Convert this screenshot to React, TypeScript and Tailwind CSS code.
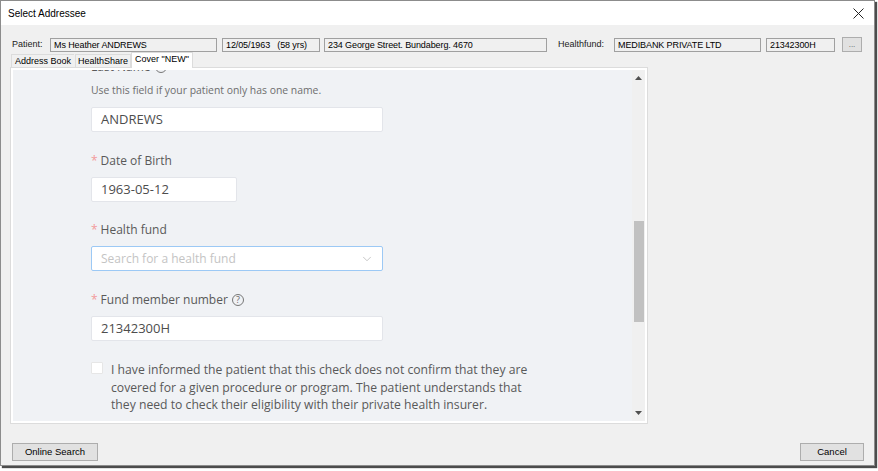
import { ChevronDown } from 'lucide-react';

const formFont = { fontFamily: '"Open Sans", "Noto Sans", sans-serif' };

function ReadBox({ width, children }: { width: string; children: React.ReactNode }) {
  return (
    <div className={`${width} h-[14px] border border-[#a0a0a0] bg-[#f0f0f0] px-[3px] text-[9px] leading-[12px] tracking-[-0.1px] text-black whitespace-nowrap overflow-hidden`}>
      {children}
    </div>
  );
}

function FieldLabel({ text, required, help }: { text: string; required?: boolean; help?: boolean }) {
  return (
    <div className="h-[18px] flex items-center text-[12px] text-[#595959]">
      {required && <span className="text-[#f39a9a] mr-[3px] text-[12px]">*</span>}
      <span>{text}</span>
      {help && (
        <span className="ml-[4px] w-[12px] h-[12px] rounded-full border border-[#777] text-[9px] leading-[10px] text-center text-[#666]">?</span>
      )}
    </div>
  );
}

function TextInput({ width, value }: { width: string; value: string }) {
  return (
    <div className={`${width} h-[25px] bg-white border border-[#e3e5ea] rounded-[2px] pl-[9px] flex items-center text-[13px] text-[#4d4d4d]`}>
      {value}
    </div>
  );
}

export default function App() {
  return (
    <div className="w-[878px] h-[471px] bg-white" style={{ fontFamily: '"Liberation Sans", Arial, sans-serif' }}>
      <div className="w-[875px] h-[466px] border border-[#8c8c8c] shadow-[2px_2px_1px_rgba(0,0,0,0.7)] flex flex-col bg-[#f0f0f0]">
        {/* title bar */}
        <div className="h-[24px] bg-white flex items-center justify-between pl-[7px] pr-[10px] shrink-0">
          <span className="text-[10px] text-black">Select Addressee</span>
          <svg width="11" height="11" viewBox="0 0 11 11" className="stroke-[#222]">
            <path d="M0.5 0.5 L10.5 10.5 M10.5 0.5 L0.5 10.5" strokeWidth="1" />
          </svg>
        </div>

        {/* patient summary row */}
        <div className="flex items-center mt-[12px] pl-[11px] text-[9px] text-black">
          <span className="w-[38px] text-[#222]">Patient:</span>
          <ReadBox width="w-[167px]">Ms Heather ANDREWS</ReadBox>
          <div className="w-[5px]" />
          <ReadBox width="w-[98px]">12/05/1963&nbsp;&nbsp;&nbsp;(58 yrs)</ReadBox>
          <div className="w-[4px]" />
          <ReadBox width="w-[223px]">234 George Street. Bundaberg. 4670</ReadBox>
          <span className="w-[56px] ml-[11px] text-[#222]">Healthfund:</span>
          <ReadBox width="w-[147px]">MEDIBANK PRIVATE LTD</ReadBox>
          <div className="w-[5px]" />
          <ReadBox width="w-[69px]">21342300H</ReadBox>
          <button className="ml-[7px] w-[20px] h-[15px] border border-[#adadad] bg-[#e1e1e1] text-[8px] leading-[10px] text-[#555]">...</button>
        </div>

        {/* tab strip */}
        <div className="relative z-10 -mb-[1px] flex items-end h-[16px] pl-[10px] text-[9px] text-black">
          <div className="h-[14px] w-[63px] border-t border-l border-[#dcdcdc] flex items-center justify-center">Address Book</div>
          <div className="h-[14px] w-[56px] ml-[1px] border-t border-l border-r border-[#dcdcdc] flex items-center justify-center">HealthShare</div>
          <div className="h-[16px] w-[62px] bg-white border-t border-l border-r border-[#dcdcdc] flex items-start justify-center pt-[1px] leading-[11px]">Cover "NEW"</div>
        </div>

        {/* tab page */}
        <div className="ml-[9px] w-[638px] h-[357px] bg-white border border-[#dcdcdc] p-[2px] flex">
          <div className="flex-1 bg-[#f0f2f5] overflow-hidden" style={formFont}>
            <div className="pl-[78px] -mt-[12px]">
              <FieldLabel text="Last Name" help />
              <div className="mt-[6px] h-[16px] text-[10.4px] leading-[16px] text-[#6e6e6e]">Use this field if your patient only has one name.</div>
              <div className="mt-[9px]"><TextInput width="w-[292px]" value="ANDREWS" /></div>

              <div className="mt-[20px]"><FieldLabel text="Date of Birth" required /></div>
              <div className="mt-[7px]"><TextInput width="w-[146px]" value="1963-05-12" /></div>

              <div className="mt-[19px]"><FieldLabel text="Health fund" required /></div>
              <div className="mt-[7px] w-[292px] h-[25px] bg-white border border-[#9cc9f5] rounded-[2px] pl-[9px] pr-[8px] flex items-center justify-between text-[12px] text-[#c4c4c4]">
                <span>Search for a health fund</span>
                <ChevronDown size={14} strokeWidth={1.2} className="text-[#b0b0b0]" />
              </div>

              <div className="mt-[20px]"><FieldLabel text="Fund member number" required help /></div>
              <div className="mt-[7px]"><TextInput width="w-[292px]" value="21342300H" /></div>

              <div className="mt-[20px] flex items-start">
                <div className="w-[12px] h-[12px] mt-[1px] bg-white border border-[#e6e6e6] rounded-[1px] shrink-0" />
                <p className="ml-[8px] w-[440px] text-[12.2px] leading-[17.5px] text-[#595959] whitespace-nowrap">
                  I have informed the patient that this check does not confirm that they are<br />
                  covered for a given procedure or program. The patient understands that<br />
                  they need to check their eligibility with their private health insurer.
                </p>
              </div>
            </div>
          </div>

          {/* vertical scrollbar */}
          <div className="w-[13px] bg-[#f0f0f0] flex flex-col items-center">
            <svg width="7" height="5" viewBox="0 0 7 5" className="mt-[6px] fill-[#505050]"><path d="M3.5 0 L7 4 L0 4 Z" /></svg>
            <div className="mt-[140px] w-[10px] h-[101px] bg-[#c1c1c1]" />
            <div className="flex-1" />
            <svg width="7" height="5" viewBox="0 0 7 5" className="mb-[6px] fill-[#505050]"><path d="M0 1 L7 1 L3.5 5 Z" /></svg>
          </div>
        </div>

        {/* footer buttons */}
        <div className="flex justify-between items-center mt-[19px] pl-[11px] pr-[10px] text-[9.5px] text-black">
          <button className="w-[86px] h-[18px] border border-[#adadad] bg-[#e1e1e1]">Online Search</button>
          <button className="w-[64px] h-[18px] border border-[#adadad] bg-[#e1e1e1]">Cancel</button>
        </div>
      </div>
    </div>
  );
}
